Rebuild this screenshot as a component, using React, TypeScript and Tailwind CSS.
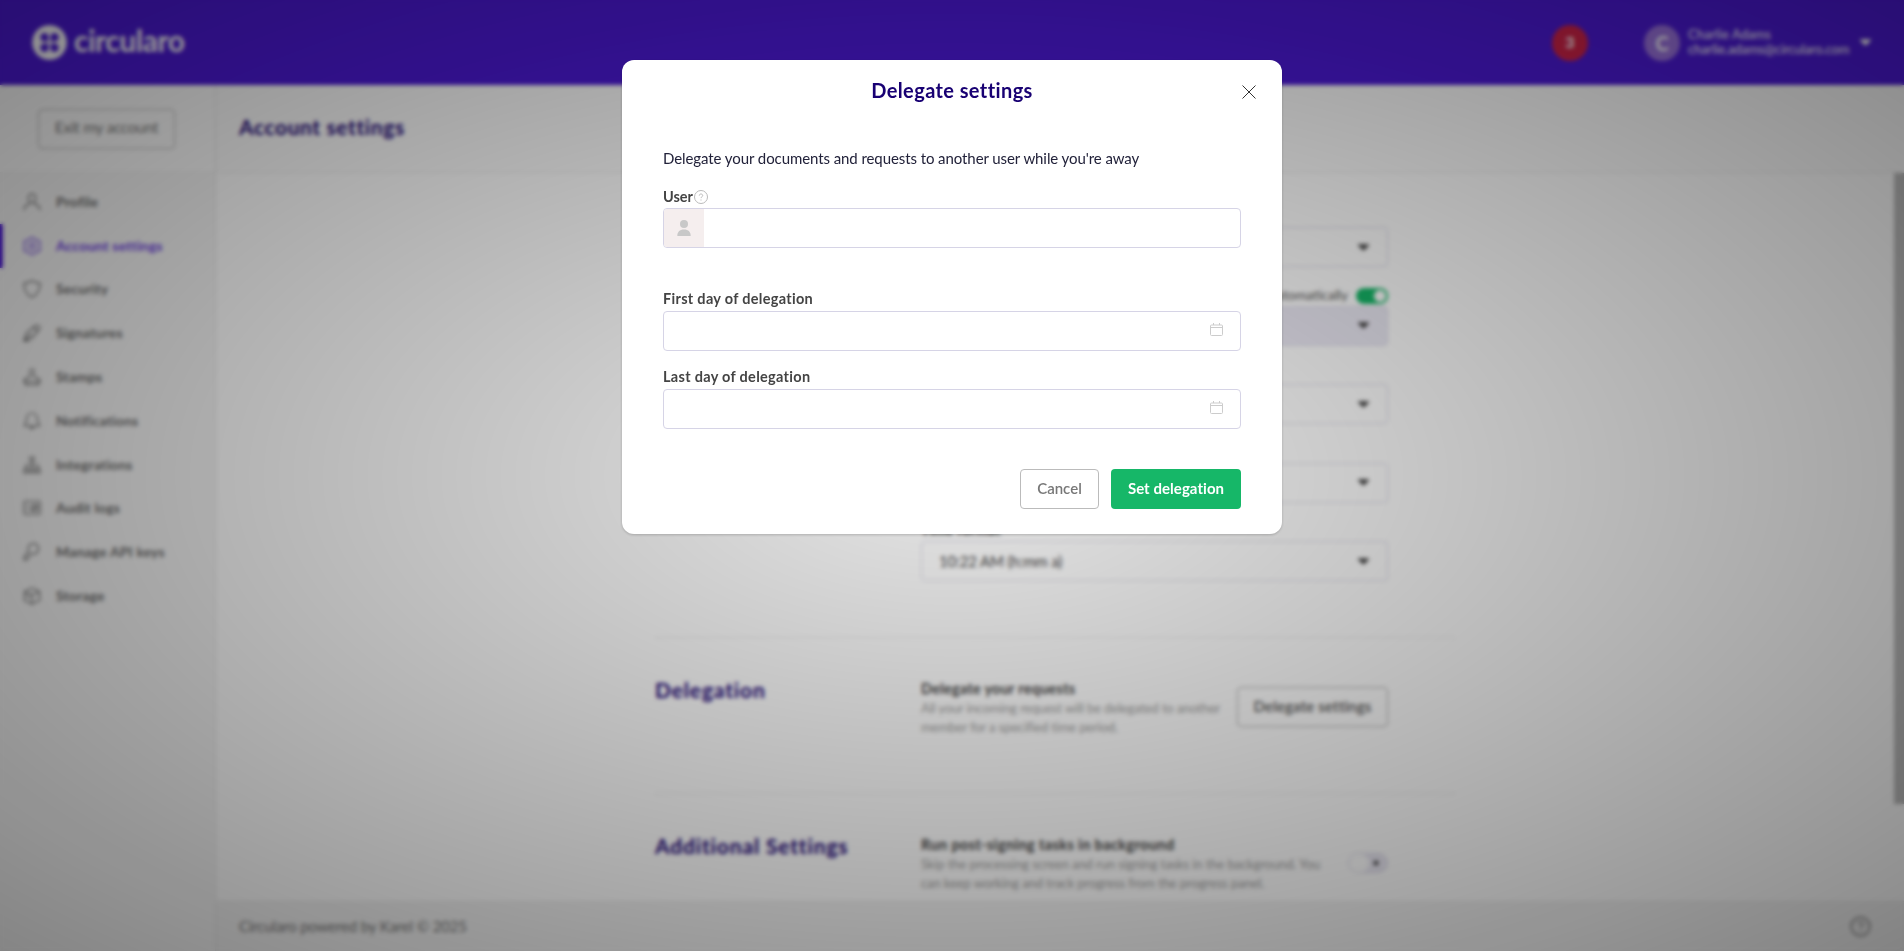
import React, { useState } from 'react';

interface IconProps {
  children: React.ReactNode;
}

interface MenuItem {
  label: string;
  icon: React.ReactNode;
}

const LineIcon: React.FC<IconProps> = ({ children }) => (
  <svg
    className="h-[18px] w-[18px] shrink-0"
    viewBox="0 0 18 18"
    fill="none"
    stroke="currentColor"
    strokeWidth="1.2"
    strokeLinecap="round"
    strokeLinejoin="round"
  >
    {children}
  </svg>
);

const menuItems: MenuItem[] = [
  {
    label: 'Profile',
    icon: <><ellipse cx="9" cy="5.2" rx="3.8" ry="4.3" /><path d="M6.7 8.8v2L3.2 12.6C1.6 13.4 1 14.6 1 17M11.3 8.8v2l3.5 1.8c1.6.8 2.2 2 2.2 4.4" /></>,
  },
  {
    label: 'Account settings',
    icon: <><path d="M7.5.5h3l1 2 2 1 2.300-.2 1.500 2.700-1 2v2l1 2-1.500 2.700-2.300-.2-2 1-1 2h-3l-1-2-2-1-2.300.2L.7 12l1-2V8l-1-2 1.500-2.700 2.300.2 2-1z" /><circle cx="9" cy="9" r="2.800" /></>,
  },
  {
    label: 'Security',
    icon: <path d="M9 .8c2 1.5 4.6 2.2 8 2.3 0 6.7-1.6 11.6-8 14.2-6.4-2.6-8-7.5-8-14.2C4.4 3 7 2.3 9 .8z" />,
  },
  {
    label: 'Signatures',
    icon: <><path d="M1 17l2.2-7.5L12 1.8c1.2-1.1 2.8-1 3.8.1s1.2 2.6.1 3.8L8.5 14.5z" /><path d="M1 17l7-7M10.5 3.5l4 4M3 17h3" /></>,
  },
  {
    label: 'Stamps',
    icon: <><path d="M7.6 7.5C6.2 4.5 6.5 1 9 1s2.8 3.5 1.4 6.5c.6 1.9 2 2.1 4 2.6 1.7.5 2.6 1.6 2.6 3.7H1c0-2.1.9-3.2 2.6-3.7 2-.5 3.4-.7 4-2.6z" /><path d="M2.5 14v3h13v-3" /></>,
  },
  {
    label: 'Notifications',
    icon: <><path d="M9 1C5.7 1 3.7 3.6 3.7 6.5c0 3.5-.7 5-2.5 7.5h15.600c-1.800-2.500-2.500-4-2.500-7.500C14.300 3.600 12.300 1 9 1z" /><path d="M7 14.200c0 3.200 4 3.200 4 0" /></>,
  },
  {
    label: 'Integrations',
    icon: <><rect x="7" y="1" width="4" height="4" /><path d="M9 5v8M3 13V9h12v4" /><rect x="1" y="13" width="4" height="4" /><rect x="7" y="13" width="4" height="4" /><rect x="13" y="13" width="4" height="4" /></>,
  },
  {
    label: 'Audit logs',
    icon: <><rect x="1" y="2" width="16" height="13.5" rx="1.5" /><path d="M4 5.5h1M4 8.8h1M4 12h1M8.5 5.5h5.5v6.500H8.500zM9 12l5-6" /></>,
  },
  {
    label: 'Manage API keys',
    icon: <path d="M8 10.5a5.3 5.3 0 1 0-2.2-2L1 14v3h3v-2h2v-2l2-2.5" />,
  },
  {
    label: 'Storage',
    icon: <><path d="M9 1l7.5 3.5v9L9 17l-7.5-3.500v-9zM1.500 4.500L9 8l7.500-3.500M9 8v9" /><path d="M4 8.500l2.500 1.300" /></>,
  },
];

const Caret: React.FC = () => (
  <svg className="h-[7px] w-[11px] shrink-0" viewBox="0 0 12 7" fill="currentColor">
    <path d="M1 0h10c.9 0 1.3.8.7 1.5L6.7 6.6c-.4.4-1 .4-1.4 0L.3 1.500C-.3.8.1 0 1 0z" />
  </svg>
);

const SelectBox: React.FC<{ value?: string; locked?: boolean }> = ({ value, locked }) => (
  <div
    className={`flex h-10 items-center justify-between rounded border border-[#dcdae9] pr-[18px] pl-[17px] text-[#444] ${
      locked ? 'bg-[#eceaf5]' : 'bg-white'
    }`}
  >
    <span className="text-[15px] tracking-[-0.15px]">{value}</span>
    <Caret />
  </div>
);

const Topbar: React.FC = () => (
  <header className="flex h-[85px] shrink-0 items-center justify-between bg-[#4c1ad6] pr-[33px] pl-8 text-white">
    <div className="flex items-center gap-[7px]">
      <svg className="h-[35px] w-[35px]" viewBox="0 0 35 35">
        <circle cx="17.5" cy="17.5" r="17.3" fill="#fff" />
        <g fill="#4c1ad6">
          <path d="M12.5 8a4.2 4.2 0 0 1 4 4v4.500h-4a4.250 4.250 0 0 1 0-8.500z" />
          <path d="M22.500 8a4.200 4.200 0 0 0-4 4v4.500h4a4.250 4.250 0 0 0 0-8.500z" />
          <path d="M12.500 27a4.200 4.200 0 0 0 4-4v-4.500h-4a4.250 4.250 0 0 0 0 8.500z" />
          <path d="M22.500 27a4.200 4.200 0 0 1-4-4v-4.500h4a4.250 4.250 0 0 1 0 8.500z" />
        </g>
        <path d="M17.500 14.500l3 3-3 3-3-3z" fill="#fff" />
      </svg>
      <span className="pb-1.5 text-[30px] leading-none font-bold tracking-[-0.5px]">circularo</span>
    </div>
    <div className="flex items-center">
      <span className="mr-[56px] flex h-9 w-9 items-center justify-center rounded-full bg-[#cf2348] pb-0.5 text-base font-bold">
        3
      </span>
      <span className="mr-[8px] flex h-9 w-9 items-center justify-center rounded-full bg-[#9a72dd] text-xl font-bold">
        C
      </span>
      <div className="mr-[10px] w-[162px] pb-0.5 text-[13px] leading-[15px] whitespace-nowrap">
        <div className="tracking-[0.1px]">Charlie Adams</div>
        <div className="tracking-[-0.1px]">charlie.adams@circularo.com</div>
      </div>
      <Caret />
    </div>
  </header>
);

const Sidebar: React.FC = () => (
  <aside className="flex w-[216px] shrink-0 flex-col border-r border-[#e6e6e6] bg-[#f6f6f6]">
    <div className="flex h-[88px] shrink-0 items-center border-b border-[#eeeeee] bg-[#fcfcfc] pl-[38px]">
      <button className="h-[40px] w-[137px] rounded border border-[#b5b5b5] pb-0.5 text-[15.5px] tracking-[-0.3px] text-[#777]">
        Exit my account
      </button>
    </div>
    <nav className="pt-[7px]">
      {menuItems.map((item) => (
        <a
          key={item.label}
          className={`flex h-[43.8px] items-center gap-[15px] border-l-[3px] pl-5 text-sm font-bold tracking-[0.15px] ${
            item.label === 'Account settings'
              ? 'border-[#4c1ad6] text-[#6a3ce0]'
              : 'border-transparent text-[#6c6c6c]'
          }`}
        >
          <LineIcon>{item.icon}</LineIcon>
          <span>{item.label}</span>
        </a>
      ))}
    </nav>
  </aside>
);

const SettingsPage: React.FC = () => (
  <main className="flex min-w-0 flex-1 flex-col">
    <div className="flex h-[88px] shrink-0 items-center border-b border-[#eeeeee] bg-[#fcfcfc] pb-[3px] pl-[23px]">
      <h1 className="text-[21px] font-bold tracking-[0.6px] text-[#180073]">Account settings</h1>
    </div>
    <div className="flex min-h-0 flex-1 bg-white">
      <div className="flex min-w-0 flex-1 justify-center">
        <div className="w-[800px] shrink-0 overflow-hidden">
          <section className="flex h-[465px] justify-end border-b border-[#ececec] pr-[67px]">
            <div className="flex w-[467px] flex-col gap-[18.5px] pt-[34px]">
              <div className="pt-5"><SelectBox /></div>
              <div>
                <div className="flex h-5 items-center justify-end gap-2 text-[13.5px] text-[#555]">
                  <span>Set automatically</span>
                  <span className="flex h-4 w-8 items-center justify-end rounded-full bg-[#16b768] p-[2px]">
                    <span className="h-3 w-3 rounded-full bg-white" />
                  </span>
                </div>
                <SelectBox locked />
              </div>
              <div className="pt-5"><SelectBox /></div>
              <div className="pt-5"><SelectBox /></div>
              <div>
                <div className="h-5 text-sm leading-[18px] font-bold tracking-[0.3px] text-[#444]">Time format</div>
                <SelectBox value="10:22 AM (h:mm a)" />
              </div>
            </div>
          </section>
          <section className="flex h-[156px] border-b border-[#ececec] pt-[40px]">
            <h2 className="w-[266px] text-[21px] leading-6 font-bold tracking-[0.85px] text-[#180073]">Delegation</h2>
            <div className="w-[316px]">
              <div className="text-[14.5px] leading-[21px] font-bold tracking-[0.25px] text-[#444]">
                Delegate your requests
              </div>
              <p className="text-[13px] leading-[19px] tracking-[-0.15px] whitespace-nowrap text-[#a0a0a0]">
                All your incoming request will be delegated to another
                <br />
                member for a specified time period.
              </p>
            </div>
            <button className="mt-[9px] h-[40px] w-[151px] rounded border border-[#b0b0b0] pb-0.5 text-[15px] font-semibold tracking-[0.15px] text-[#555]">
              Delegate settings
            </button>
          </section>
          <section className="flex pt-[40px]">
            <h2 className="w-[266px] text-[21px] leading-6 font-bold tracking-[0.85px] text-[#180073]">
              Additional Settings
            </h2>
            <div className="w-[427px]">
              <div className="text-[14.5px] leading-[21px] font-bold tracking-[0.38px] text-[#444]">
                Run post-signing tasks in background
              </div>
              <p className="text-[13px] leading-[18.5px] tracking-[-0.1px] whitespace-nowrap text-[#a0a0a0]">
                Skip the processing screen and run signing tasks in the background. You
                <br />
                can keep working and track progress from the progress panel.
              </p>
            </div>
            <span className="mt-[19px] flex h-5 w-10 items-center justify-between rounded-full border border-[#dcdae9] bg-[#ebe9f4] pr-[8px]">
              <span className="h-[18px] w-5 rounded-full bg-white" />
              <svg className="h-[6px] w-[6px]" viewBox="0 0 7 7" stroke="#333" strokeWidth="2">
                <path d="M1 1l5 5M6 1L1 6" />
              </svg>
            </span>
          </section>
        </div>
      </div>
      <div className="h-[631px] w-[10px] bg-[#bcbcbc]" />
    </div>
    <footer className="flex h-[50px] shrink-0 items-center justify-between border-t border-[#ececec] bg-[#f3f3f3] pr-[33px] pb-px pl-[23px] text-[#777]">
      <span className="text-[15px] tracking-[-0.15px]">Circularo powered by Karel © 2025</span>
      <svg className="h-[21px] w-[21px]" viewBox="0 0 21 21" fill="none" stroke="#999" strokeWidth="2">
        <circle cx="10.5" cy="10.5" r="9.3" />
        <path d="M8 8.500c0-3.400 5-3.200 5 0 0 1.700-2.500 1.800-2.500 3.500M10.500 13.800v1.600" strokeWidth="1.6" />
      </svg>
    </footer>
  </main>
);

const DateField: React.FC<{ label: string }> = ({ label }) => (
  <label className="block">
    <span className="block h-[22px] pt-px text-[14.5px] leading-[18px] font-bold tracking-[0.3px] text-[#444]">
      {label}
    </span>
    <span className="flex h-10 items-center justify-end rounded border border-[#d6d4e6] pr-[17px]">
      <svg className="mb-[3px] h-[13px] w-[13px]" viewBox="0 0 13 13" fill="none" stroke="#ccc">
        <rect x="0.5" y="2" width="12" height="10.5" rx="1" />
        <path d="M.5 4.500h12M3.500 0v2M9.500 0v2" />
      </svg>
    </span>
  </label>
);

const DelegateModal: React.FC<{ onClose: () => void }> = ({ onClose }) => (
  <div className="h-[474px] w-[660px] rounded-xl bg-white shadow-[0_1px_3px_rgba(0,0,0,0.2)]">
    <div className="flex h-[62px] items-center justify-between pr-[26px] pl-[40px]">
      <h2 className="flex-1 pb-0.5 text-center text-[20px] font-bold tracking-[0.4px] text-[#180073]">
        Delegate settings
      </h2>
      <button onClick={onClose} className="pt-px">
        <svg className="h-[14px] w-[14px]" viewBox="0 0 14 14" stroke="#333" strokeWidth="1">
          <path d="M.5.5l13 13M13.500.5l-13 13" />
        </svg>
      </button>
    </div>
    <div className="px-[41px] pt-[26px]">
      <p className="text-[15px] leading-5 tracking-[-0.08px] text-[#22223a]">
        Delegate your documents and requests to another user while you're away
      </p>
      <div className="mt-[20px] flex h-[20px] items-start text-[14.5px] leading-[18px] font-bold text-[#444]">
        User
        <svg className="mt-[2px] ml-px h-[14px] w-[14px]" viewBox="0 0 14 14" fill="none" stroke="#bbb">
          <circle cx="7" cy="7" r="6.5" />
          <path d="M5.300 5.600c0-2.200 3.400-2.100 3.400 0 0 1.200-1.700 1.200-1.700 2.500M7 9.500v1" />
        </svg>
      </div>
      <div className="flex h-10 overflow-hidden rounded border border-[#d6d4e6]">
        <span className="flex w-10 items-center justify-center bg-[#f5eeee] text-[#c8c8c8]">
          <svg className="h-4 w-[14px]" viewBox="0 0 14 16" fill="currentColor">
            <circle cx="7" cy="4" r="4" />
            <path d="M.3 16c0-4 2.200-6.500 6.700-6.500s6.700 2.500 6.700 6.500z" />
          </svg>
        </span>
      </div>
      <div className="mt-[41px] flex flex-col gap-4">
        <DateField label="First day of delegation" />
        <DateField label="Last day of delegation" />
      </div>
      <div className="mt-10 flex justify-end gap-3 text-[15px]">
        <button
          onClick={onClose}
          className="h-10 w-[79px] rounded border border-[#bbb] pb-0.5 font-semibold text-[#777]"
        >
          Cancel
        </button>
        <button className="h-10 w-[130px] rounded bg-[#16b768] pb-0.5 font-bold tracking-[0.05px] text-white">
          Set delegation
        </button>
      </div>
    </div>
  </div>
);

const App: React.FC = () => {
  const [open, setOpen] = useState(true);

  return (
    <div className="h-[951px] overflow-hidden font-['Lato',sans-serif]">
      <div className="flex h-full flex-col">
        <Topbar />
        <div className="flex min-h-0 flex-1">
          <Sidebar />
          <SettingsPage />
        </div>
      </div>
      {open && (
        <div className="fixed inset-0 flex items-start justify-center bg-[radial-gradient(rgba(0,0,0,0.1),rgba(0,0,0,0.46))] pt-[60px] backdrop-blur-[2px]">
          <DelegateModal onClose={() => setOpen(false)} />
        </div>
      )}
    </div>
  );
};

export default App;
